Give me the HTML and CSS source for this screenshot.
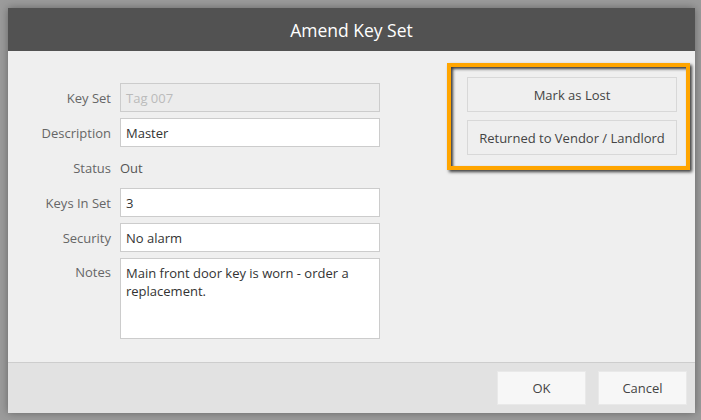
FILE: index.html
```html
<!DOCTYPE html>
<html>
<head>
<meta charset="utf-8">
<link rel="stylesheet" href="styles.css">
</head>
<body>
<div class="dialog">
  <div class="header">Amend Key Set</div>
  <div class="content">
    <div class="form">
      <label class="label">Key Set</label>
      <div class="input disabled">Tag 007</div>
      <label class="label">Description</label>
      <div class="input">Master</div>
      <label class="label">Status</label>
      <div class="value">Out</div>
      <label class="label">Keys In Set</label>
      <div class="input">3</div>
      <label class="label">Security</label>
      <div class="input">No alarm</div>
      <label class="label top">Notes</label>
      <div class="input notes">Main front door key is worn - order a replacement.</div>
    </div>
    <div class="highlight">
      <button class="action">Mark as Lost</button>
      <button class="action">Returned to Vendor / Landlord</button>
    </div>
  </div>
  <div class="footer">
    <button class="fbtn">OK</button>
    <button class="fbtn">Cancel</button>
  </div>
</div>
</body>
</html>
```
FILE: styles.css
```css
html, body {
  margin: 0;
  padding: 0;
}
body {
  background: #9b9b9b;
  padding: 8px 6px 7px 8px;
  font-family: "Open Sans", "Noto Sans", sans-serif;
  font-size: 13px;
  color: #333;
}
.dialog {
  width: 687px;
  height: 405px;
  display: flex;
  flex-direction: column;
  background: #efefef;
  box-shadow: 0 0 8px rgba(0,0,0,0.35);
}
.header {
  height: 43px;
  flex: none;
  background: #525252;
  color: #fff;
  font-size: 17.5px;
  display: flex;
  align-items: center;
  justify-content: center;
}
.content {
  flex: 1;
  display: flex;
  align-items: flex-start;
  padding: 12px 5px 0 0;
}
.form {
  display: grid;
  grid-template-columns: 103px 260px;
  grid-auto-rows: 29px;
  row-gap: 6px;
  column-gap: 9px;
  margin-top: 20px;
}
.label {
  color: #666;
  text-align: right;
  display: flex;
  align-items: center;
  justify-content: flex-end;
}
.label.top {
  align-items: flex-start;
  padding-top: 5px;
}
.input {
  box-sizing: border-box;
  background: #fff;
  border: 1px solid #ccc;
  padding: 0 5px;
  display: flex;
  align-items: center;
  color: #333;
}
.input.disabled {
  background: #ececec;
  color: #bbb;
}
.value {
  display: flex;
  align-items: center;
  color: #555;
}
.input.notes {
  grid-row: span 2;
  height: 81px;
  align-self: start;
  align-items: flex-start;
  padding: 5px 5px;
  line-height: 18px;
}
.highlight {
  margin-left: auto;
  width: 243px;
  height: 107px;
  box-sizing: border-box;
  border: 4px solid #ffa500;
  box-shadow: 2px 2px 3px rgba(0,0,0,0.75), inset 2px 2px 3px rgba(0,0,0,0.75);
  padding: 10px 9px 0 16px;
  display: flex;
  flex-direction: column;
  gap: 8px;
}
.action {
  height: 35px;
  width: 210px;
  background: #efefef;
  border: 1px solid #d8d8d8;
  font-family: inherit;
  font-size: 13px;
  color: #444;
  padding: 0;
}
.footer {
  height: 51px;
  flex: none;
  box-sizing: border-box;
  border-top: 1px solid #cdcdcd;
  background: #e2e2e2;
  display: flex;
  justify-content: flex-end;
  align-items: flex-start;
  padding: 8px 8px 0 0;
  gap: 12px;
}
.fbtn {
  width: 89px;
  height: 34px;
  background: #f7f7f7;
  border: 1px solid #e9e9e9;
  font-family: inherit;
  font-size: 13px;
  color: #444;
  padding: 0;
}
```
